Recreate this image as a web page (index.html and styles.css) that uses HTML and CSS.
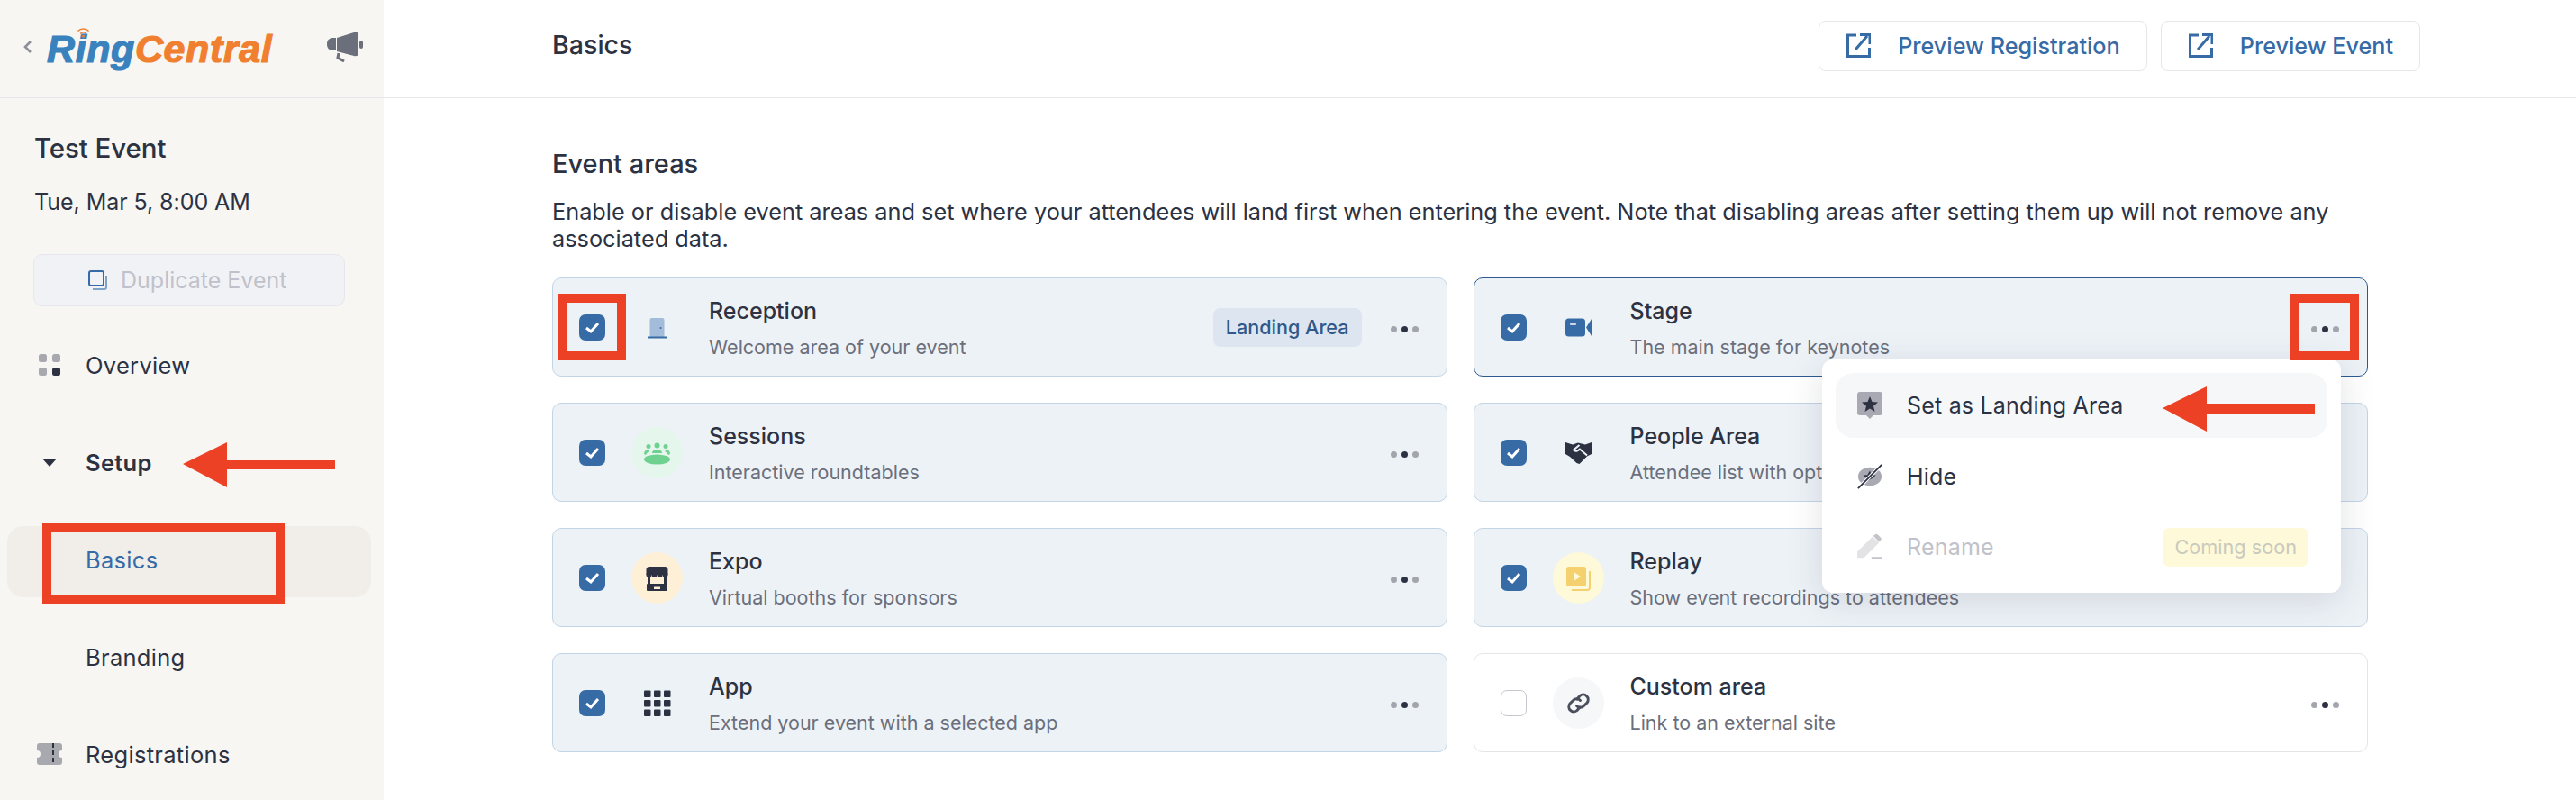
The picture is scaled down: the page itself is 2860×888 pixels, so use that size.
FILE: index.html
```html
<!DOCTYPE html>
<html lang="en">
<head>
<meta charset="utf-8">
<title>Basics</title>
<link rel="stylesheet" href="styles.css">
</head>
<body>
<div class="app">
  <aside class="sidebar">
    <div class="brand">
      <svg class="chev" viewBox="0 0 10 16"><path d="M8 2 2 8l6 6" fill="none" stroke="#8d909b" stroke-width="2.6"/></svg>
      <div class="logo"><span class="ring">Ring</span><span class="central">Central</span>
        <svg class="wifi" viewBox="0 0 16 14"><g fill="none" stroke="#f08030" stroke-width="1.6"><path d="M1.5 6a9 9 0 0 1 13 0"/><path d="M4.5 9a5 5 0 0 1 7 0"/></g><circle cx="8" cy="12" r="1.6" fill="#f08030"/></svg>
      </div>
      <svg class="mega" viewBox="0 0 40 34"><path d="M0 14c0-5 3-7 7-7h3v14H7c-4 0-7-2-7-7Z" fill="#6b6f7c"/><path d="M11 7 30 1c2-.6 5-.5 5 2v22c0 2-3 2.500-5 2l-19-5Z" fill="#6b6f7c"/><rect x="36" y="10" width="4" height="9" rx="2" fill="#6b6f7c"/><path d="M13 24l-1 5 7 4" fill="none" stroke="#6b6f7c" stroke-width="3"/></svg>
    </div>
    <h2 class="event-name">Test Event</h2>
    <p class="event-date">Tue, Mar 5, 8:00 AM</p>
    <button class="dup" type="button">
      <svg class="dup-icon" viewBox="0 0 21 22"><rect x="1" y="1" width="16" height="16" rx="2" fill="none" stroke="#366ba6" stroke-width="2"/><path d="M20 6v13a2 2 0 0 1-2 2H5" fill="none" stroke="#7fa2c8" stroke-width="2"/></svg>
      <span>Duplicate Event</span>
    </button>
    <nav class="nav">
      <a class="nav-item"><svg class="nav-icon" viewBox="0 0 28 24"><rect x="2" y="0" width="9" height="9" rx="2.500" fill="#a8a9ae"/><rect x="17" y="0" width="9" height="9" rx="2.500" fill="#a8a9ae"/><rect x="2" y="15" width="9" height="9" rx="2.500" fill="#a8a9ae"/><rect x="17" y="15" width="9" height="9" rx="2.500" fill="#2c3242"/></svg><span>Overview</span></a>
      <a class="nav-item strong"><svg class="nav-icon" viewBox="0 0 28 24"><path d="M6 8h16l-8 9Z" fill="#2c3242"/></svg><span>Setup</span></a>
      <a class="nav-item sub active"><span>Basics</span></a>
      <a class="nav-item sub"><span>Branding</span></a>
      <a class="nav-item"><svg class="nav-icon" viewBox="0 0 28 24"><path d="M3 0h22a3 3 0 0 1 3 3v5a4 4 0 0 0 0 8v5a3 3 0 0 1-3 3H3a3 3 0 0 1-3-3v-5a4 4 0 0 0 0-8V3a3 3 0 0 1 3-3Z" fill="#a8a9ae"/><path d="M18 0v24" stroke="#2c3242" stroke-width="2" stroke-dasharray="5 3"/></svg><span>Registrations</span></a>
    </nav>
  </aside>

  <main class="main">
    <header class="topbar">
      <h1 class="page-title">Basics</h1>
      <div class="actions">
        <a class="preview"><svg class="ext" viewBox="0 0 28 28"><path d="M12 2H2.500v23.500H26.500V16" fill="none" stroke="#366ba6" stroke-width="3"/><path d="M11 18 24 3" fill="none" stroke="#366ba6" stroke-width="3"/><path d="M16 1.500h11V12" fill="none" stroke="#366ba6" stroke-width="3"/></svg><span>Preview Registration</span></a>
        <a class="preview"><svg class="ext" viewBox="0 0 28 28"><path d="M12 2H2.500v23.500H26.500V16" fill="none" stroke="#366ba6" stroke-width="3"/><path d="M11 18 24 3" fill="none" stroke="#366ba6" stroke-width="3"/><path d="M16 1.500h11V12" fill="none" stroke="#366ba6" stroke-width="3"/></svg><span>Preview Event</span></a>
      </div>
    </header>
    <section class="content">
      <h3 class="section-title">Event areas</h3>
      <p class="section-desc">Enable or disable event areas and set where your attendees will land first when entering the event. Note that disabling areas after setting them up will not remove any associated data.</p>
      <div class="grid">
        <div class="card">
          <span class="check"><svg viewBox="0 0 29 29"><path d="M8 15l5 4 8-9" fill="none" stroke="#fff" stroke-width="3"/></svg></span>
          <span class="area-icon"><svg viewBox="0 0 57 57"><path d="M20.500 20a2 2 0 0 1 2-2h12a2 2 0 0 1 2 2v19h-16Z" fill="#a3bcd9"/><rect x="18" y="38.500" width="21" height="2" fill="#366ba6"/><circle cx="32.500" cy="29" r="1" fill="#366ba6"/></svg></span>
          <div class="card-text"><div class="card-title">Reception</div><div class="card-sub">Welcome area of your event</div></div>
          <span class="badge">Landing Area</span>
          <span class="dots"><i></i><i></i><i></i></span>
        </div>
        <div class="card selected">
          <span class="check"><svg viewBox="0 0 29 29"><path d="M8 15l5 4 8-9" fill="none" stroke="#fff" stroke-width="3"/></svg></span>
          <span class="area-icon"><svg viewBox="0 0 57 57"><rect x="14" y="18.500" width="22" height="20" rx="3.500" fill="#366ba6"/><path d="M37 28.500 43 19v19Z" fill="#366ba6"/><rect x="19" y="23.500" width="7" height="2.500" rx="1" fill="#c9d8e8"/></svg></span>
          <div class="card-text"><div class="card-title">Stage</div><div class="card-sub">The main stage for keynotes</div></div>
          <span class="dots"><i></i><i></i><i></i></span>
        </div>
        <div class="card">
          <span class="check"><svg viewBox="0 0 29 29"><path d="M8 15l5 4 8-9" fill="none" stroke="#fff" stroke-width="3"/></svg></span>
          <span class="area-icon sessions"><svg viewBox="0 0 57 57"><g fill="#6fd18f"><ellipse cx="28.500" cy="36" rx="14.500" ry="5.500"/><circle cx="19" cy="21.500" r="2.500"/><circle cx="28.500" cy="20.500" r="3"/><circle cx="38" cy="21.500" r="2.500"/><path d="M14 30c0-3 2-5 4-5l2 2c-2 1-3 2-4 4Z"/><path d="M43 30c0-3-2-5-4-5l-2 2c2 1 3 2 4 4Z"/><path d="M23 29c0-3 3-4 5.500-4s5.500 1 5.500 4Z"/></g></svg></span>
          <div class="card-text"><div class="card-title">Sessions</div><div class="card-sub">Interactive roundtables</div></div>
          <span class="dots"><i></i><i></i><i></i></span>
        </div>
        <div class="card">
          <span class="check"><svg viewBox="0 0 29 29"><path d="M8 15l5 4 8-9" fill="none" stroke="#fff" stroke-width="3"/></svg></span>
          <span class="area-icon"><svg viewBox="0 0 57 57"><path d="M14 17 22 19.500 28 17.500 36 19.500 43 17V30L38 32.500 29.500 41 26.500 40 19 33 14 30Z" fill="#2c3242"/><path d="M29.500 20 23 25.500c2 2.500 5 1 7-1L38 31.500" fill="none" stroke="#edf2f7" stroke-width="2"/></svg></span>
          <div class="card-text"><div class="card-title">People Area</div><div class="card-sub">Attendee list with optional networking</div></div>
          <span class="dots"><i></i><i></i><i></i></span>
        </div>
        <div class="card">
          <span class="check"><svg viewBox="0 0 29 29"><path d="M8 15l5 4 8-9" fill="none" stroke="#fff" stroke-width="3"/></svg></span>
          <span class="area-icon expo"><svg viewBox="0 0 57 57"><g fill="#2c3242"><path d="M20 16h17a3.500 3.500 0 0 1 3.500 3.500V25h-24v-5.500A3.500 3.500 0 0 1 20 16Z"/><circle cx="19.500" cy="25" r="3"/><circle cx="25.500" cy="25" r="3"/><circle cx="31.500" cy="25" r="3"/><circle cx="37.500" cy="25" r="3"/><rect x="18" y="26" width="3" height="11"/><rect x="36" y="26" width="3" height="11"/><rect x="17" y="35" width="23" height="8" rx="1"/></g><rect x="25" y="38.500" width="7" height="2.500" fill="#fdf0d7"/></svg></span>
          <div class="card-text"><div class="card-title">Expo</div><div class="card-sub">Virtual booths for sponsors</div></div>
          <span class="dots"><i></i><i></i><i></i></span>
        </div>
        <div class="card">
          <span class="check"><svg viewBox="0 0 29 29"><path d="M8 15l5 4 8-9" fill="none" stroke="#fff" stroke-width="3"/></svg></span>
          <span class="area-icon replay"><svg viewBox="0 0 57 57"><path d="M41 21v18a3 3 0 0 1-3 3H21" fill="none" stroke="#f4d06f" stroke-width="2"/><rect x="15" y="16" width="22" height="22" rx="2.500" fill="#f4d06f"/><path d="M24 22.500l7 4.500-7 4.500Z" fill="#fef9d8"/></svg></span>
          <div class="card-text"><div class="card-title">Replay</div><div class="card-sub">Show event recordings to attendees</div></div>
          <span class="dots"><i></i><i></i><i></i></span>
        </div>
        <div class="card">
          <span class="check"><svg viewBox="0 0 29 29"><path d="M8 15l5 4 8-9" fill="none" stroke="#fff" stroke-width="3"/></svg></span>
          <span class="area-icon"><svg viewBox="0 0 57 57"><g fill="#2c3242"><rect x="14" y="14.500" width="7.500" height="7.500" rx="1"/><rect x="25" y="14.500" width="7.500" height="7.500" rx="1"/><rect x="36" y="14.500" width="7.500" height="7.500" rx="1"/><rect x="14" y="25" width="7.500" height="7.500" rx="1"/><rect x="25" y="25" width="7.500" height="7.500" rx="1"/><rect x="36" y="25" width="7.500" height="7.500" rx="1"/><rect x="14" y="35.500" width="7.500" height="7.500" rx="1"/><rect x="25" y="35.500" width="7.500" height="7.500" rx="1"/><rect x="36" y="35.500" width="7.500" height="7.500" rx="1"/></g></svg></span>
          <div class="card-text"><div class="card-title">App</div><div class="card-sub">Extend your event with a selected app</div></div>
          <span class="dots"><i></i><i></i><i></i></span>
        </div>
        <div class="card off">
          <span class="check"></span>
          <span class="area-icon link"><svg viewBox="0 0 57 57"><g fill="none" stroke="#4a4f5c" stroke-width="3" stroke-linecap="round"><path d="M27 24l3-3.500a5.500 5.500 0 0 1 8 7.500l-3.500 3.500a5.500 5.500 0 0 1-8 0"/><path d="M30 33l-3 3.500a5.500 5.500 0 0 1-8-7.500l3.500-3.500a5.500 5.500 0 0 1 8 0"/></g></svg></span>
          <div class="card-text"><div class="card-title">Custom area</div><div class="card-sub">Link to an external site</div></div>
          <span class="dots"><i></i><i></i><i></i></span>
        </div>
      </div>
    </section>
  </main>

  <div class="menu">
    <div class="menu-item hover">
      <svg class="menu-icon" viewBox="0 0 28 30"><path d="M3 0h22a3 3 0 0 1 3 3v20a3 3 0 0 1-3 3h-7l-4 4-4-4H3a3 3 0 0 1-3-3V3a3 3 0 0 1 3-3Z" fill="#a8a9b3"/><path d="M14 5l2.500 6 6.500.500-5 4.200 1.500 6.300-5.500-3.400L8.500 22l1.500-6.300-5-4.200 6.500-.500Z" fill="#2c3242"/></svg>
      <span>Set as Landing Area</span>
    </div>
    <div class="menu-item">
      <svg class="menu-icon" viewBox="0 0 30 30"><ellipse cx="15" cy="15" rx="14" ry="11" fill="#a8a9b3"/><path d="M15 8l2 5 5 .500-3 3L12 20l-2-4-3-2.500 5-.500Z" fill="#2c3242"/><path d="M1 29 29 1" stroke="#fff" stroke-width="4"/><path d="M1 29 29 1" stroke="#2c3242" stroke-width="2"/></svg>
      <span>Hide</span>
    </div>
    <div class="menu-item disabled">
      <svg class="menu-icon" viewBox="0 0 30 30"><path d="M0 21 18 3l8 7L8 28H0Z" fill="#e3e3e6"/><path d="M19 2l3-2c1-.5 2 0 3 1l3 3c1 1 1 2 0 3l-2 2Z" fill="#c4c5cb"/><rect x="17" y="27" width="12" height="2" fill="#c4c5cb"/></svg>
      <span>Rename</span>
      <span class="soon">Coming soon</span>
    </div>
  </div>

  <span class="mark mark-check"></span>
  <span class="mark mark-dots"></span>
  <span class="mark mark-basics"></span>
  <svg class="arrow arrow-setup" viewBox="0 0 170 50"><path d="M0 24 49 0v20h120v10H49v20Z" fill="#ec4125"/></svg>
  <svg class="arrow arrow-menu" viewBox="0 0 170 50"><path d="M0 24 49 0v19h120v11H49v20Z" fill="#ec4125"/></svg>
</div>
</body>
</html>
```

FILE: styles.css
```css
* { box-sizing: border-box; }
html, body { margin: 0; padding: 0; background: #fff; }
body { font-family: Inter, "Liberation Sans", sans-serif; color: #2c3242; }
svg { display: block; flex: none; }
h1, h2, h3, p { margin: 0; }

.app { position: relative; display: flex; width: 2860px; height: 888px; overflow: hidden; }

/* Sidebar */
.sidebar { width: 426px; flex: none; height: 888px; background: #f7f6f3; display: flex; flex-direction: column; overflow: hidden; }
.sidebar > * { flex: none; }
.brand { position: relative; height: 109px; border-bottom: 1px solid #e6e7ea; display: flex; align-items: flex-start; padding: 44px 0 0 26px; }
.chev { width: 10px; height: 16px; }
.logo { position: relative; margin: -15px 0 0 16px; height: 50px; font: italic 700 43px/50px "Liberation Sans", sans-serif; letter-spacing: .6px; -webkit-text-stroke: 1.200px currentColor; white-space: nowrap; width: 251px; }
.ring { color: #3a82bd; }
.central { color: #f08030; }
.wifi { position: absolute; left: 33px; top: 0; width: 15px; height: 13px; }
.mega { width: 40px; height: 34px; margin: -9px 0 0 60px; }

.event-name { margin: 35px 0 0 38px; font-size: 29.500px; line-height: 40px; font-weight: 500; letter-spacing: -.1px; }
.event-date { margin: 23px 0 0 38px; font-size: 25px; line-height: 34px; letter-spacing: -.05px; }
.dup { margin: 41px 0 0 37px; width: 346px; height: 58px; background: #f1f2f6; border: 1px solid #e5e7ec; border-radius: 10px; display: flex; align-items: center; padding: 0 0 0 60px; gap: 15px; font: 400 25px/34px Inter, sans-serif; color: #c0c1ca; }
.dup-icon { width: 21px; height: 22px; }

.nav { display: flex; flex-direction: column; margin-top: 25px; }
.nav-item { flex: none; height: 80px; display: flex; align-items: center; gap: 26px; padding-left: 41px; font-size: 25.500px; margin-bottom: 28px; letter-spacing: .3px; }
.nav-icon { width: 28px; height: 24px; }
.nav-item.strong { font-weight: 600; margin-bottom: 31px; }
.nav-item.sub { padding-left: 95px; }
.nav-item.active { height: 79px; width: 404px; margin: 0 0 26px 8px; padding: 0 0 5px 87px; background: #f1eeea; border-radius: 18px; color: #366ba6; }

/* Main */
.main { flex: 1; min-width: 0; display: flex; flex-direction: column; }
.topbar { height: 109px; flex: none; border-bottom: 1px solid #e6e7ea; display: flex; align-items: flex-start; justify-content: space-between; padding: 0 173px 0 187px; }
.page-title { font-size: 28.600px; line-height: 40px; font-weight: 500; margin-top: 30px; }
.actions { display: flex; gap: 15px; margin-top: 23px; }
.preview { height: 56px; display: flex; align-items: center; gap: 30px; padding: 0 29px; border: 1px solid #e6e7ea; border-radius: 8px; color: #366ba6; font-size: 25.200px; font-weight: 500; white-space: nowrap; }
.ext { width: 28px; height: 28px; }

.content { padding: 55px 231px 0 187px; }
.section-title { font-size: 29px; line-height: 36px; font-weight: 500; }
.section-desc { margin-top: 20px; font-size: 25.300px; line-height: 30px; width: 2016px; }
.grid { display: grid; grid-template-columns: 1fr 1fr; column-gap: 29px; row-gap: 29px; margin-top: 28px; }

.card { height: 110px; display: flex; align-items: center; padding: 0 31px 0 29px; background: #edf2f7; border: 1.500px solid #c3d4e6; border-radius: 10px; }
.card.selected { border-color: #2e5a8f; }
.card.off { background: #fff; border-color: #e5e5e5; }
.check { width: 29px; height: 29px; flex: none; background: #366ba6; border-radius: 7px; }
.off .check { background: #fff; border: 1.500px solid #c6c7cd; }
.area-icon { width: 57px; height: 57px; flex: none; margin-left: 29px; border-radius: 50%; }
.sessions { background: #e5f6ec; }
.expo { background: #fdf0d7; }
.replay { background: #fef9d8; }
.link { background: #f6f7f9; }
.card-text { margin-left: 29px; flex: 1; min-width: 0; }
.card-title { font-size: 25px; line-height: 38px; font-weight: 500; }
.card-sub { margin-top: 6px; font-size: 21.500px; line-height: 30px; color: #6b6f7c; white-space: nowrap; }
.badge { height: 43px; display: flex; align-items: center; padding: 0 14px; margin-right: 32px; background: #dce5f0; border-radius: 8px; color: #31588a; font-size: 21.600px; font-weight: 500; }
.dots { display: flex; gap: 5px; margin-top: 4px; }
.dots i { width: 7px; height: 7px; border-radius: 50%; background: #a3a5ad; }
.dots i:nth-child(2) { background: #2c3242; }

/* Overlays */
.menu { position: absolute; left: 2023px; top: 399px; width: 576px; height: 259px; padding: 15px; background: #fff; border-radius: 12px; box-shadow: 0 8px 40px rgba(44, 50, 66, .14); display: flex; flex-direction: column; gap: 7px; }
.menu-item { height: 72px; display: flex; align-items: center; gap: 27px; padding: 0 21px 0 24px; border-radius: 20px; font-size: 25px; letter-spacing: .2px; }
.menu-item.hover { background: #f6f7f9; }
.menu-item.disabled { color: #c0c1ca; }
.menu-icon { width: 28px; height: 30px; }
.soon { margin-left: auto; height: 43px; display: flex; align-items: center; padding: 0 13px; background: #fef9d8; border-radius: 8px; color: #c9c9bd; font-size: 21.700px; letter-spacing: 0; }

.mark { position: absolute; border: 10px solid #ec4125; }
.mark-check { left: 619px; top: 326px; width: 76px; height: 74px; }
.mark-dots { left: 2543px; top: 326px; width: 76px; height: 74px; }
.mark-basics { left: 47px; top: 580px; width: 269px; height: 90px; }
.arrow { position: absolute; width: 170px; height: 50px; }
.arrow-setup { left: 203px; top: 491px; }
.arrow-menu { left: 2401px; top: 429px; }
```
